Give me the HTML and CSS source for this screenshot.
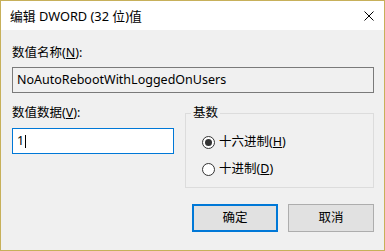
FILE: index.html
```html
<!DOCTYPE html>
<html lang="zh-CN">
<head>
<meta charset="utf-8">
<title>编辑 DWORD (32 位)值</title>
<link rel="stylesheet" href="styles.css">
</head>
<body>
<div class="window">
  <div class="titlebar">
    <span class="title">编辑 DWORD (32 位)值</span>
    <svg class="close" width="10" height="10" viewBox="0 0 10 10" aria-hidden="true">
      <path d="M0.5 0.5 L9.5 9.5 M9.5 0.5 L0.5 9.5" stroke="#000" stroke-width="1" fill="none"/>
    </svg>
  </div>
  <div class="content">
    <div class="lbl">数值名称(<u>N</u>):</div>
    <div class="field readonly">NoAutoRebootWithLoggedOnUsers</div>
    <div class="row">
      <div class="col-left">
        <div class="lbl">数值数据(<u>V</u>):</div>
        <div class="field active"><span>1</span><span class="caret"></span></div>
      </div>
      <fieldset class="group">
        <legend>基数</legend>
        <div class="radios">
          <div class="radio"><span class="dot checked"></span><span>十六进制(<u>H</u>)</span></div>
          <div class="radio"><span class="dot"></span><span>十进制(<u>D</u>)</span></div>
        </div>
      </fieldset>
    </div>
    <div class="buttons">
      <div class="btn default">确定</div>
      <div class="btn">取消</div>
    </div>
  </div>
</div>
</body>
</html>
```

FILE: styles.css
```css
html, body {
  margin: 0;
  padding: 0;
  background: #f0f0f0;
}
body {
  font-family: "Noto Sans", "Noto Sans CJK SC", sans-serif;
  font-size: 12.5px;
  color: #000;
}
.window {
  width: 385px;
  height: 251px;
  box-sizing: border-box;
  border: 1px solid #c7b05a;
  background: #f0f0f0;
  display: flex;
  flex-direction: column;
}
.titlebar {
  height: 29px;
  background: #fff;
  display: flex;
  align-items: center;
  padding: 0 10px 0 9px;
  flex-shrink: 0;
}
.title {
  flex: 1;
  line-height: 16px;
  font-size: 12.8px;
}
.close {
  display: block;
  margin-top: 1px;
}
.content {
  padding: 15px 10px 0 11px;
  display: flex;
  flex-direction: column;
}
.lbl {
  line-height: 16px;
  height: 16px;
}
u {
  text-decoration: underline;
  text-underline-offset: 1px;
}
.field {
  box-sizing: border-box;
  height: 26px;
  border: 1px solid #7a7a7a;
  padding: 0 4px;
  display: flex;
  align-items: center;
  line-height: 16px;
}
.readonly {
  margin-top: 6px;
  background: #f0f0f0;
}
.row {
  display: flex;
  gap: 11px;
  margin-top: 12px;
}
.col-left {
  width: 162px;
  display: flex;
  flex-direction: column;
}
.active {
  margin-top: 7px;
  border-color: #0078d7;
  background: #fff;
}
.caret {
  display: inline-block;
  width: 1px;
  height: 13px;
  background: #000;
  margin-left: 1px;
}
.group {
  margin: 0;
  width: 189px;
  box-sizing: border-box;
  border: 1px solid #dcdcdc;
  padding: 0 0 10px 5px;
  min-width: 0;
}
.group legend {
  padding: 0 2px;
  line-height: 16px;
  height: 16px;
}
.radios {
  display: flex;
  flex-direction: column;
  gap: 11px;
  margin-top: 13px;
  padding-left: 11px;
}
.radio {
  display: flex;
  align-items: center;
  height: 16px;
  line-height: 16px;
}
.dot {
  box-sizing: border-box;
  width: 13px;
  height: 13px;
  border: 1px solid #333;
  border-radius: 50%;
  background: #fff;
  margin-right: 4px;
  display: flex;
  align-items: center;
  justify-content: center;
}
.dot.checked::after {
  content: "";
  width: 7px;
  height: 7px;
  border-radius: 50%;
  background: #333;
}
.buttons {
  display: flex;
  justify-content: flex-end;
  gap: 10px;
  margin-top: 16px;
}
.btn {
  box-sizing: border-box;
  width: 86px;
  height: 28px;
  background: #e1e1e1;
  border: 1px solid #adadad;
  display: flex;
  align-items: center;
  justify-content: center;
  line-height: 16px;
}
.btn.default {
  border: 2px solid #0078d7;
}
```
